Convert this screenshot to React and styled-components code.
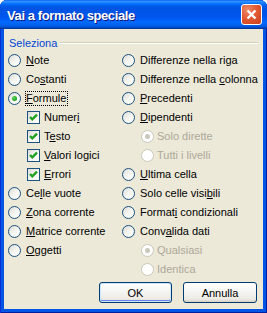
import React from 'react'
import styled, { createGlobalStyle } from 'styled-components'

const GlobalStyle = createGlobalStyle`
  html, body {
    margin: 0;
    padding: 0;
    background: #ffffff;
  }
  body {
    font-family: 'Liberation Sans', Arial, sans-serif;
    font-size: 11px;
  }
`

const colors = {
  face: '#ece9d8',
  text: '#000000',
  disabled: '#aca899',
  groupLabel: '#0046d5',
  groupLine: '#d0d0bf',
  controlBorder: '#1c5180',
  check: '#21a121',
}

const Window = styled.div`
  width: 267px;
  height: 313px;
  display: flex;
  flex-direction: column;
  border-radius: 7px 7px 0 0;
  background: #0055e5;
  box-shadow: inset 1px 0 0 #0831d9, inset -1px 0 0 #001ea0, inset 0 -1px 0 #001ea0;
  overflow: hidden;
`

const TitleBar = styled.div`
  height: 29px;
  flex-shrink: 0;
  display: flex;
  align-items: center;
  justify-content: space-between;
  padding: 0 5px 0 7px;
  background: linear-gradient(
    to bottom,
    #0058ee 0%,
    #3593ff 4%,
    #288eff 7%,
    #127dff 10%,
    #036ffc 14%,
    #0262ee 18%,
    #0057e5 24%,
    #0054e3 30%,
    #0055eb 56%,
    #005bf5 66%,
    #026afe 76%,
    #0062ef 86%,
    #0052d6 93%,
    #0040ab 97%,
    #003092 100%
  );
`

const Title = styled.span`
  color: #ffffff;
  font-family: 'Liberation Sans', Arial, sans-serif;
  font-weight: bold;
  font-size: 13px;
  letter-spacing: -0.4px;
  text-shadow: 1px 1px 0 #0a1883;
  padding-top: 1px;
`

const CloseButton = styled.div`
  width: 21px;
  height: 21px;
  box-sizing: border-box;
  border: 1px solid #ffffff;
  border-radius: 3px;
  display: flex;
  align-items: center;
  justify-content: center;
  background: radial-gradient(circle at 30% 25%, #f08a68 0%, #e25a34 45%, #c9401b 100%);
`

const Client = styled.div`
  flex: 1;
  margin: 0 4px 4px;
  background: ${colors.face};
  display: flex;
  flex-direction: column;
  padding-top: 7px;
`

const GroupHeader = styled.div`
  display: flex;
  align-items: center;
  height: 14px;
  padding: 0 5px;
  gap: 3px;
`

const GroupLabel = styled.span`
  color: ${colors.groupLabel};
`

const GroupLine = styled.div`
  flex: 1;
  height: 1px;
  background: ${colors.groupLine};
  border-bottom: 1px solid #ffffff;
`

const Columns = styled.div`
  display: grid;
  grid-template-columns: 118px 1fr;
  margin-top: 1px;
`

const Column = styled.div`
  display: flex;
  flex-direction: column;
  padding-left: ${(p) => p.pad || 0}px;
`

const Row = styled.div`
  height: 19px;
  display: flex;
  align-items: center;
  gap: ${(p) => p.gap ?? 4}px;
  padding-left: ${(p) => p.indent || 0}px;
  color: ${(p) => (p.disabled ? colors.disabled : colors.text)};
  white-space: nowrap;
`

const Label = styled.span`
  border: 1px dotted ${(p) => (p.focused ? '#000000' : 'transparent')};
  padding: 0 1px 0 0;
  line-height: 13px;
`

const RadioCircle = styled.span`
  width: 13px;
  height: 13px;
  flex-shrink: 0;
  box-sizing: border-box;
  border-radius: 50%;
  border: 1px solid ${(p) => (p.disabled ? '#cac8bb' : colors.controlBorder)};
  background: ${(p) =>
    p.disabled
      ? '#ffffff'
      : 'linear-gradient(135deg, #dcdcd7 0%, #f4f4f0 50%, #ffffff 100%)'};
  display: flex;
  align-items: center;
  justify-content: center;
`

const RadioDot = styled.span`
  width: 5px;
  height: 5px;
  border-radius: 50%;
  background: ${(p) =>
    p.disabled ? '#cac8bb' : 'radial-gradient(circle at 35% 35%, #5dd35d 0%, #21a121 70%)'};
`

const CheckBox = styled.span`
  width: 13px;
  height: 13px;
  flex-shrink: 0;
  box-sizing: border-box;
  border: 1px solid ${colors.controlBorder};
  background: linear-gradient(135deg, #dcdcd7 0%, #f4f4f0 50%, #ffffff 100%);
  display: flex;
  align-items: center;
  justify-content: center;
`

const Footer = styled.div`
  display: flex;
  justify-content: flex-end;
  gap: 11px;
  padding: 3px 6px 0 0;
`

const Button = styled.div`
  width: ${(p) => p.width}px;
  height: 21px;
  box-sizing: border-box;
  border: 1px solid #003c74;
  border-radius: 3px;
  display: flex;
  align-items: center;
  justify-content: center;
  background: linear-gradient(to bottom, #ffffff 0%, #f6f6f3 40%, #eceae4 85%, #d6d0c5 100%);
  box-shadow: ${(p) =>
    p.isDefault ? 'inset 0 0 0 1px #cee7ff, inset 0 -1px 0 1px #6982ee' : 'none'};
`

const Key = ({ text, k }) => {
  if (k == null) return text
  return (
    <>
      {text.slice(0, k)}
      <u>{text[k]}</u>
      {text.slice(k + 1)}
    </>
  )
}

const Radio = ({ label, k, checked, disabled, focused, indent, gap }) => (
  <Row disabled={disabled} indent={indent} gap={gap}>
    <RadioCircle disabled={disabled}>{checked && <RadioDot disabled={disabled} />}</RadioCircle>
    <Label focused={focused}>
      <Key text={label} k={k} />
    </Label>
  </Row>
)

const Check = ({ label, k }) => (
  <Row indent={19} gap={3}>
    <CheckBox>
      <svg width="9" height="9" viewBox="0 0 9 9">
        <path d="M1 4 L3.3 6.3 L8 1.6" stroke={colors.check} strokeWidth="2.4" fill="none" />
      </svg>
    </CheckBox>
    <Label>
      <Key text={label} k={k} />
    </Label>
  </Row>
)

export default function App() {
  return (
    <>
      <GlobalStyle />
      <Window>
        <TitleBar>
          <Title>Vai a formato speciale</Title>
          <CloseButton>
            <svg width="11" height="11" viewBox="0 0 11 11">
              <path d="M1.5 1.5 L9.5 9.5 M9.5 1.5 L1.5 9.5" stroke="#ffffff" strokeWidth="2.4" />
            </svg>
          </CloseButton>
        </TitleBar>
        <Client>
          <GroupHeader>
            <GroupLabel>Seleziona</GroupLabel>
            <GroupLine />
          </GroupHeader>
          <Columns>
            <Column pad={4}>
              <Radio label="Note" k={0} />
              <Radio label="Costanti" k={2} />
              <Radio label="Formule" k={0} checked focused />
              <Check label="Numeri" k={5} />
              <Check label="Testo" k={1} />
              <Check label="Valori logici" k={0} />
              <Check label="Errori" k={0} />
              <Radio label="Celle vuote" k={2} />
              <Radio label="Zona corrente" k={0} />
              <Radio label="Matrice corrente" k={0} />
              <Radio label="Oggetti" k={0} />
            </Column>
            <Column>
              <Radio label="Differenze nella riga" />
              <Radio label="Differenze nella colonna" k={17} />
              <Radio label="Precedenti" k={0} />
              <Radio label="Dipendenti" k={0} />
              <Radio label="Solo dirette" indent={19} gap={2} checked disabled />
              <Radio label="Tutti i livelli" indent={19} gap={2} disabled />
              <Radio label="Ultima cella" k={0} />
              <Radio label="Solo celle visibili" k={15} />
              <Radio label="Formati condizionali" k={6} />
              <Radio label="Convalida dati" k={4} />
              <Radio label="Qualsiasi" indent={19} gap={2} checked disabled />
              <Radio label="Identica" indent={19} gap={2} disabled />
            </Column>
          </Columns>
          <Footer>
            <Button width={73} isDefault>OK</Button>
            <Button width={74}>Annulla</Button>
          </Footer>
        </Client>
      </Window>
    </>
  )
}
